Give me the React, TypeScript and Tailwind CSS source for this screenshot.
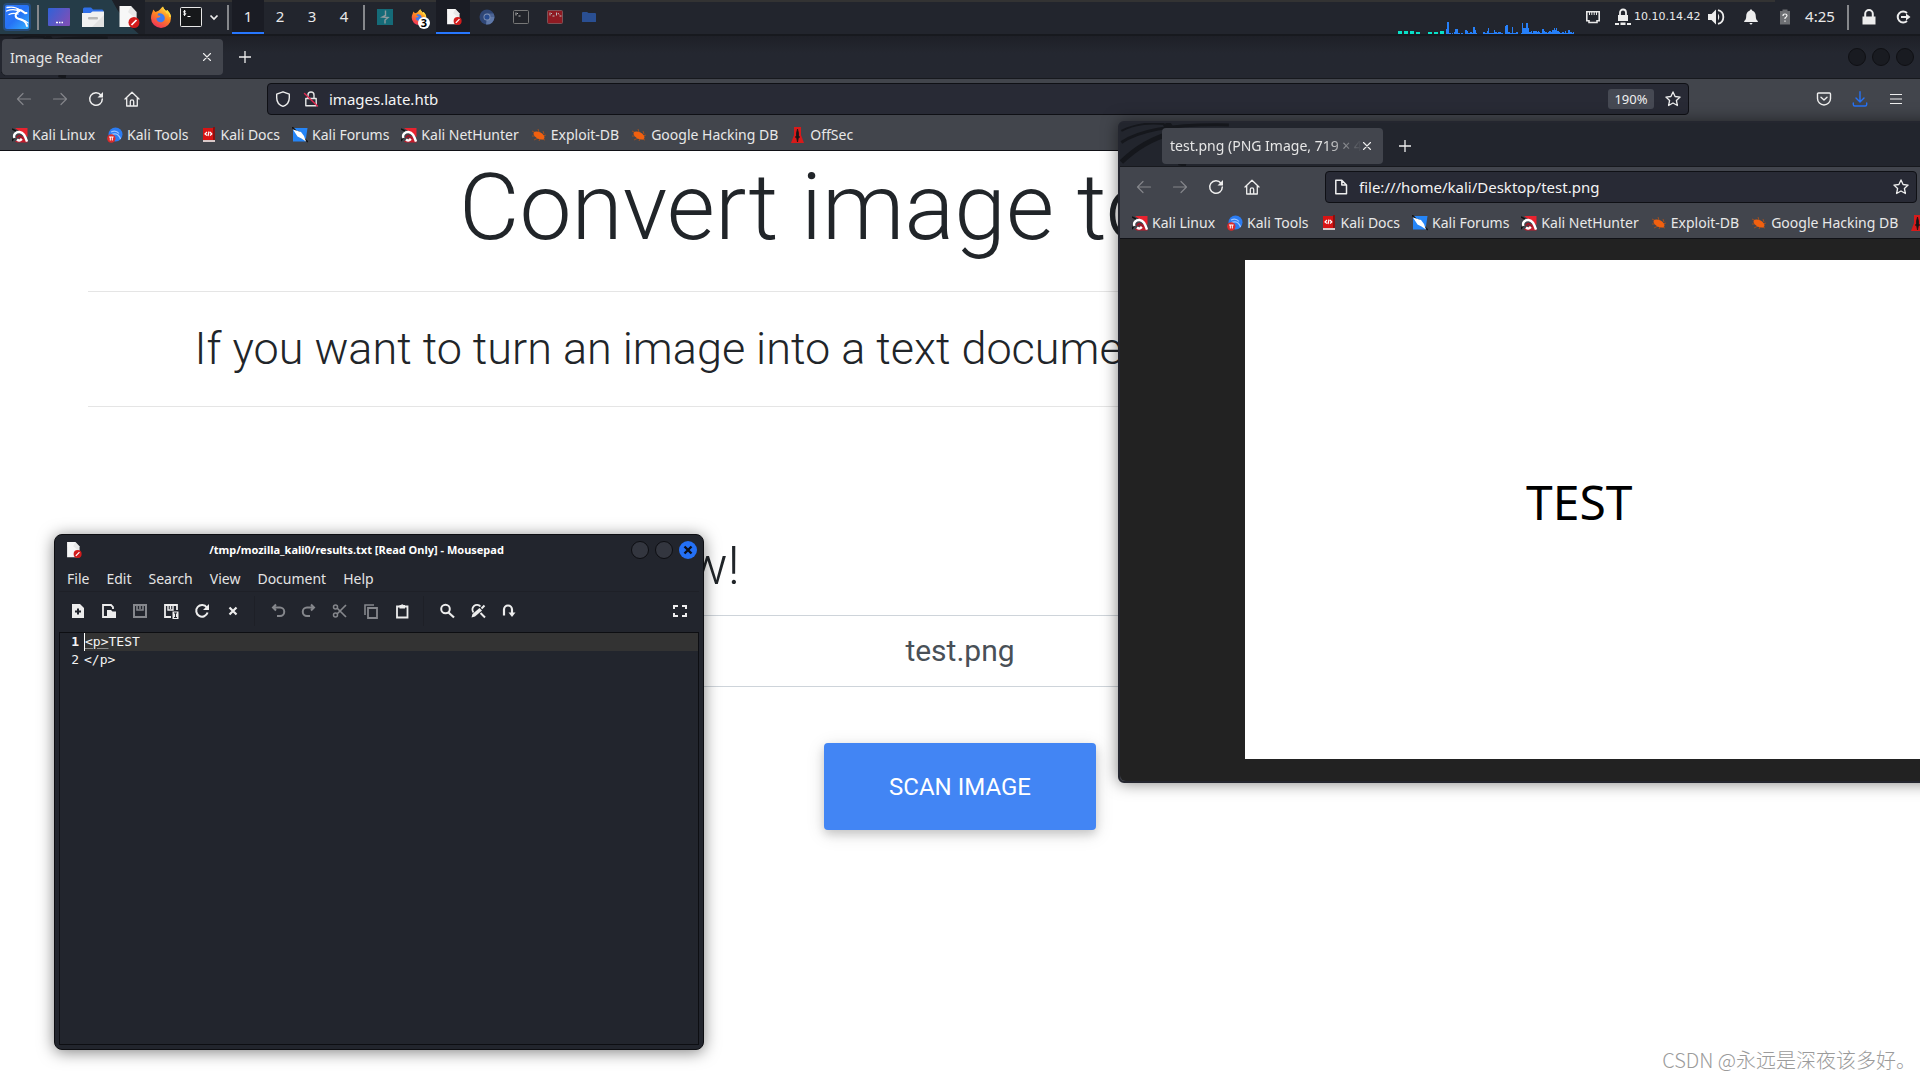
import React from "react";

type IconProps = { className?: string };

const KaliIcon = () => (
  <svg viewBox="0 0 28 28" className="size-7">
    <defs>
      <linearGradient id="kaliBg" x1="0" y1="0" x2="1" y2="1">
        <stop offset="0" stopColor="#2f7bff" />
        <stop offset="0.5" stopColor="#2672f5" />
        <stop offset="1" stopColor="#34b0ff" />
      </linearGradient>
    </defs>
    <rect x="0" y="0" width="28" height="28" rx="4" fill="#2a76f5" opacity="0.3" />
    <rect x="2" y="2" width="24" height="24" rx="2" fill="url(#kaliBg)" />
    <g fill="none" stroke="#fff" strokeLinecap="round">
      <path d="M4 4.500c5-1 10 0 13 3M3.500 8c5-2 10-1.500 13 .5M6 11.500c3-1.500 6-1.500 9-.5" strokeWidth="1.300" />
      <path d="M14.500 6.500c3 .2 5 1.300 7.500 3.600l1.500-.1" strokeWidth="2" />
      <path d="M15 9c-3 1.500-3.500 5.500.5 6.800 4 1 7.500 2 8.500 7.200" strokeWidth="2" />
      <path d="M18.500 17c2.500 0 4.500.7 6.500 2.800" strokeWidth="1.100" />
    </g>
  </svg>
);

const DesktopIcon = () => (
  <svg viewBox="0 0 22 18" className="h-[18px] w-[22px]">
    <defs>
      <linearGradient id="desk" x1="0" y1="0" x2="1" y2="0.6">
        <stop offset="0" stopColor="#2f62d8" />
        <stop offset="1" stopColor="#7a50b8" />
      </linearGradient>
    </defs>
    <rect width="22" height="18" rx="1" fill="url(#desk)" />
    <path d="M8 14.500h2M11 14.500h1.500M13.500 14.500H15" stroke="#fff" strokeWidth="1.400" />
  </svg>
);

const FilesIcon = () => (
  <svg viewBox="0 0 24 22" className="h-[22px] w-6">
    <path d="M2 9V3q0-1.500 1.500-1.500h6.500l2 2h9q1.500 0 1.500 1.500v4z" fill="#2f6fe8" />
    <path d="M1 7h8.500l2-1.500H23V21H1z" fill="#f1f1f1" />
    <path d="M23 9v12H11z" fill="#e2e2e2" />
    <rect x="7" y="11" width="10" height="2.500" rx="1" fill="#b9b9b9" />
  </svg>
);

const DocIcon = ({ className = "size-[22px]" }: IconProps) => (
  <svg viewBox="0 0 22 22" className={className}>
    <path d="M1.500 0H13l5.500 6v15h-17z" fill="#f7f7f7" />
    <path d="M13 0l5.500 6v7L10 6z" fill="#d9d9d9" opacity="0.5" />
    <circle cx="16" cy="16.500" r="5.500" fill="#d31c1c" />
    <path d="M13.500 19l5-5" stroke="#fff" strokeWidth="1.700" />
  </svg>
);

const FirefoxIcon = ({ className = "size-[22px]" }: IconProps) => (
  <svg viewBox="0 0 22 22" className={className}>
    <defs>
      <linearGradient id="ffx" x1="0.8" y1="0" x2="0.3" y2="1">
        <stop offset="0" stopColor="#ffe14a" />
        <stop offset="0.45" stopColor="#ff8a1e" />
        <stop offset="1" stopColor="#f0305c" />
      </linearGradient>
    </defs>
    <path d="M3.200 3.500L5.500 6l3-1.200C10 4 10.500 2 13 .5c.2 2 2 3 3 4.500l1.500-1c.5 1.500 3.500 3.500 3.500 8a10 9.800 0 0 1-20 .2C.8 8.500 2.800 6.500 3.200 3.500z" fill="url(#ffx)" />
    <path d="M8 7.500c3-1 6.500.8 6.800 4.200.2 3-2.300 4.800-4.600 4.500C7.500 15.900 6.200 14 6.500 12l2.500-.5c1-.3 1.500-1 1.200-1.600L7.500 9.300z" fill="#3c7bf2" />
    <path d="M13 .5c-1 3 3 4.500 3.800 7.500.8-.3 1-.9.8-1.600 1 1 1.500 3 1.400 4.600L21 11c0-4-3-5.500-3.500-7L16 5c-1-1.500-2.800-2.500-3-4.500z" fill="#ffd93c" />
  </svg>
);

const TermIcon = () => (
  <svg viewBox="0 0 22 20" className="h-5 w-[22px]">
    <rect x="0.500" y="0.500" width="21" height="19" rx="1" fill="#16181a" stroke="#e8e8e8" />
    <path d="M5.700 4.500c-.6-.7-2.200-.6-2.200.4 0 1.200 2.300.6 2.300 1.900 0 1-1.800 1.100-2.500.3M4.600 3v6M7.500 9.500h3" fill="none" stroke="#fff" strokeWidth="1" />
  </svg>
);

const BurpIcon = () => (
  <svg viewBox="0 0 16 16" className="size-4">
    <rect width="16" height="16" fill="#156b78" />
    <path d="M8.500 1.500v5L5.500 8l5.500 .5L8 11v3.500" fill="none" stroke="#8f9a9d" strokeWidth="1.400" />
  </svg>
);

const ChromiumIcon = () => (
  <svg viewBox="0 0 16 16" className="size-4">
    <circle cx="8" cy="8" r="7.500" fill="#2f4675" />
    <path d="M8 8l7.500 0A7.500 7.500 0 0 1 7 15.500z" fill="#5f78a8" />
    <path d="M8 4.500h6.500A7.500 7.500 0 0 1 15.500 8L11 8z" fill="#4c6494" />
    <circle cx="8" cy="8" r="3.500" fill="#8293b4" />
    <circle cx="8" cy="8" r="2.600" fill="#274b8f" />
  </svg>
);

const MiniTerm = ({ red = false }: { red?: boolean }) => (
  <svg viewBox="0 0 16 16" className="size-4">
    <rect x="0.500" y="1.500" width="15" height="13" rx="1" fill={red ? "#8f1a22" : "#22242a"} stroke={red ? "#7d5156" : "#777"} />
    <path d="M3 3.500v3M4 4l1 1M5.500 7h2" stroke="#bbb" strokeWidth="1" />
    {red && <path d="M9.500 3.500v3M11 4l1 1.500M12.500 7h2" stroke="#bbb" strokeWidth="1" />}
  </svg>
);

const FolderIcon = () => (
  <svg viewBox="0 0 16 16" className="size-4">
    <path d="M1 4q0-1 1-1h4l1.500 1H14q1 0 1 1v7.500q0 .5-.5.500h-13Q1 13 1 12.500z" fill="#2a4f92" />
  </svg>
);

const Chevron = () => (
  <svg viewBox="0 0 10 10" className="size-2.5" fill="none" stroke="#eee" strokeWidth="1.700">
    <path d="M1.500 3.500L5 7l3.500-3.500" />
  </svg>
);

const EthernetIcon = () => (
  <svg viewBox="0 0 16 16" className="size-4" fill="none" stroke="#e8e8e8" strokeWidth="1.600">
    <path d="M1.800 2.800h12.400v9H12v1.700H4v-1.700H1.800z" />
    <path d="M4.500 3v3M6.800 3v3M9.200 3v3M11.500 3v3" strokeWidth="1" />
  </svg>
);

const VpnIcon = () => (
  <svg viewBox="0 0 16 18" className="h-[18px] w-4" fill="#ededed">
    <path d="M3 7h10v6H3z" />
    <path d="M5 7.500V4.500a3 3 0 0 1 6 0v3" fill="none" stroke="#ededed" strokeWidth="1.800" />
    <path d="M0 15h4v2H0zM5.500 14.500h5V17h-5zM12 15h4v2h-4z" />
  </svg>
);

const VolumeIcon = () => (
  <svg viewBox="0 0 18 18" className="size-[18px]" fill="#ededed">
    <path d="M1 6h3.500L9 1.500v15L4.500 12H1z" />
    <path d="M11 5.500q2.500 3.500 0 7z" />
    <path d="M11 2.200a7 7 0 0 1 0 13.600" fill="none" stroke="#ededed" strokeWidth="1.800" />
  </svg>
);

const BellIcon = () => (
  <svg viewBox="0 0 16 16" className="size-4" fill="#ededed">
    <path d="M8 .5c1 0 1.300.7 1.300 1.300C12 2.500 12.800 5 12.800 7.500c0 2.500.7 3.500 2 4.500v1H1.200v-1c1.300-1 2-2 2-4.500C3.200 5 4 2.500 6.700 1.800 6.700 1.200 7 .5 8 .5zM6.500 14h3q-.3 1.500-1.500 1.500T6.500 14z" />
  </svg>
);

const BatteryIcon = () => (
  <svg viewBox="0 0 12 16" className="h-4 w-3">
    <path d="M1 2h2.500V.5h5V2H11v13.500H1z" fill="#6d6f73" />
    <path d="M4 7q0-2 2-2t2 1.600Q8 8 6 9v1M6 11.500v1.300" fill="none" stroke="#f4f4f4" strokeWidth="1.200" />
  </svg>
);

const PadlockIcon = () => (
  <svg viewBox="0 0 14 16" className="h-4 w-3.5">
    <path d="M.5 7.500h13v8H.5z" fill="#ededed" />
    <path d="M3.200 8V4.800a3.800 3.800 0 0 1 7.600 0V8" fill="none" stroke="#ededed" strokeWidth="2" />
  </svg>
);

const LogoutIcon = () => (
  <svg viewBox="0 0 16 16" className="size-4">
    <path d="M12 4A5.500 5.500 0 1 0 12 12" fill="none" stroke="#ededed" strokeWidth="2" />
    <path d="M6 7h5V4.500L15.500 8 11 11.500V9H6z" fill="#ededed" />
  </svg>
);

const strokeProps = { fill: "none", strokeLinecap: "round", strokeLinejoin: "round" } as const;

const BackIcon = () => (
  <svg viewBox="0 0 16 16" className="size-4" stroke="#83858a" strokeWidth="1.200" {...strokeProps}>
    <path d="M14.500 8H1.500M7 2.500L1.500 8 7 13.500" />
  </svg>
);
const ForwardIcon = () => (
  <svg viewBox="0 0 16 16" className="size-4" stroke="#83858a" strokeWidth="1.200" {...strokeProps}>
    <path d="M1.500 8h13M9 2.500L14.500 8 9 13.500" />
  </svg>
);
const ReloadIcon = () => (
  <svg viewBox="0 0 16 16" className="size-4">
    <path d="M13 4.200A6.300 6.300 0 1 0 14.300 8" stroke="#eee" strokeWidth="1.500" {...strokeProps} />
    <path d="M15 1v5.500H9.500z" fill="#eee" />
  </svg>
);
const HomeIcon = () => (
  <svg viewBox="0 0 16 16" className="size-4" stroke="#eee" strokeWidth="1.300" {...strokeProps}>
    <path d="M1 8l7-6.800L15 8M2.700 6.800V15h10.600V6.800M6.300 15v-4.500a1.700 1.700 0 0 1 3.400 0V15" />
  </svg>
);
const ShieldIcon = () => (
  <svg viewBox="0 0 16 16" className="size-4" stroke="#eee" strokeWidth="1.400" {...strokeProps}>
    <path d="M8 .8l6.300 2.400v3.500c0 4-2.500 7.300-6.300 8.600-3.800-1.300-6.300-4.600-6.300-8.600V3.200z" />
  </svg>
);
const InsecureIcon = () => (
  <svg viewBox="0 0 16 16" className="size-4" stroke="#e6e6e6" strokeWidth="1.400" {...strokeProps}>
    <path d="M2.800 7.500h10.400v7.200H2.800zM5 7V4a3 3 0 0 1 6 0v3" />
    <path d="M1.500 2.500l13 12.500" stroke="#e22850" />
  </svg>
);
const FileIcon = () => (
  <svg viewBox="0 0 16 16" className="size-4" stroke="#eee" strokeWidth="1.500" {...strokeProps}>
    <path d="M2.800 1.300h6L13.500 6v8.700H2.800zM8.800 1.500V6h4.500" />
  </svg>
);
const StarIcon = () => (
  <svg viewBox="0 0 16 16" className="size-4" stroke="#eee" strokeWidth="1.300" {...strokeProps}>
    <path d="M8 .9l2.100 4.600 5 .6-3.700 3.400 1 5L8 12l-4.400 2.500 1-5L.9 6.100l5-.6z" />
  </svg>
);
const PocketIcon = () => (
  <svg viewBox="0 0 16 16" className="size-4" stroke="#eee" strokeWidth="1.400" {...strokeProps}>
    <path d="M2.500 2h11q1 0 1 1v4.500a6.500 6.500 0 0 1-13 0V3q0-1 1-1zM5 6.300L8 9l3-2.700" />
  </svg>
);
const DownloadIcon = () => (
  <svg viewBox="0 0 16 16" className="size-4" stroke="#2672f5" strokeWidth="1.400" {...strokeProps}>
    <path d="M8 .8v10M4 7l4 4 4-4M1.300 12v1.500q0 1.500 1.500 1.500h10.400q1.500 0 1.500-1.500V12" />
  </svg>
);
const MenuIcon = () => (
  <svg viewBox="0 0 16 16" className="size-4" stroke="#eee" strokeWidth="1.200">
    <path d="M2 3.500h12M2 8h12M2 12.500h12" />
  </svg>
);
const CloseIcon = ({ className = "size-2.5" }: IconProps) => (
  <svg viewBox="0 0 10 10" className={className} stroke="#eee" strokeWidth="1.100" {...strokeProps}>
    <path d="M1.500 1.500l7 7M8.500 1.500l-7 7" />
  </svg>
);
const PlusIcon = () => (
  <svg viewBox="0 0 14 14" className="size-3.5" stroke="#eee" strokeWidth="1.300">
    <path d="M7 1v12M1 7h12" />
  </svg>
);

const RedDragon = () => (
  <svg viewBox="0 0 16 16" className="size-4">
    <path d="M3 1h12.500v9z" fill="#e8232f" />
    <path d="M0 2l4 2M0 14l3-5" stroke="#111" strokeWidth="1.500" />
    <path d="M3 14.500L5 15.500h10.500V14L11 9z" fill="#c41c2c" />
    <path d="M2.500 11C1 7.500 4 4.800 7.500 5c4 .3 5.500 4 7.500 9.500M5 12.500c2.500 2 5 .5 4.500-1.500" fill="none" stroke="#fff" strokeWidth="2.400" />
    <path d="M5 11q1-3 3.500-2l2.500 3" fill="none" stroke="#a01424" strokeWidth="1.800" />
  </svg>
);
const ToolsIcon = () => (
  <svg viewBox="0 0 16 16" className="size-4">
    <circle cx="8.500" cy="7.500" r="7" fill="#2b7cf3" />
    <path d="M4 5c3-1.500 6-1 8 1.500M4 8c3-2 6-1 7 0s2 2 2.500 4" fill="none" stroke="#9ec5ff" strokeWidth="1.200" />
    <circle cx="4.300" cy="11.500" r="4.200" fill="#d92b2b" />
    <path d="M2 10h4.600M3.300 10v3.500M5.300 10v3.500" stroke="#fff" strokeWidth="1" />
  </svg>
);
const DocsIcon = () => (
  <svg viewBox="0 0 16 16" className="size-4">
    <path d="M2 1h11v12H2z" fill="#d81414" />
    <path d="M12 0h2v14h-2z" fill="#8a1010" />
    <path d="M2 13h12v2H2z" fill="#d9c9c9" />
    <path d="M6 5L4 7l2 1.500M9 5l1.800 2L9 8.500M8 4.500L7 9" fill="none" stroke="#fff" strokeWidth="1.200" />
  </svg>
);
const ForumsIcon = () => (
  <svg viewBox="0 0 16 16" className="size-4">
    <path d="M1 1h14.500l-2 13.500H1z" fill="#2585f7" />
    <path d="M0 0l6 6 1-2M8 8l8 7" fill="none" stroke="#141414" strokeWidth="1.600" />
    <path d="M1 2.500L9 5l3 4 2 5.500-4.500-3-4-2z" fill="#fff" />
  </svg>
);
const BugIcon = () => (
  <svg viewBox="0 0 16 16" className="size-4">
    <path d="M1 4l4 2M7 2l1 3M12 4l1 3M1 9h4M3 13l4-2M8 14l1-2M15 8l-3 1M14 13l-3-1" stroke="#a8501c" strokeWidth="0.900" />
    <ellipse cx="8" cy="8.500" rx="6" ry="3.300" transform="rotate(28 8 8.500)" fill="#f2600f" />
  </svg>
);
const OffSecIcon = () => (
  <svg viewBox="0 0 16 16" className="size-4">
    <path d="M4 0h7v8l3 8H1l3-8z" fill="#d81a1a" />
    <path d="M7.500 2l1 4v4L7.500 15l-1-5V6z" fill="#161616" stroke="#161616" strokeWidth="0.800" />
    <path d="M5 10h5" stroke="#161616" strokeWidth="1.200" />
  </svg>
);

const bookmarks = [
  { label: "Kali Linux", icon: <RedDragon /> },
  { label: "Kali Tools", icon: <ToolsIcon /> },
  { label: "Kali Docs", icon: <DocsIcon /> },
  { label: "Kali Forums", icon: <ForumsIcon /> },
  { label: "Kali NetHunter", icon: <RedDragon /> },
  { label: "Exploit-DB", icon: <BugIcon /> },
  { label: "Google Hacking DB", icon: <BugIcon /> },
  { label: "OffSec", icon: <OffSecIcon /> },
];

const Bookmarks = () => (
  <nav aria-label="Bookmarks" className="flex h-[31px] shrink-0 items-center gap-3 pl-3 text-[14px] text-[#e8e8e8]">
    {bookmarks.map((b) => (
      <a key={b.label} href="#" className="flex shrink-0 items-center gap-1 whitespace-nowrap">
        {b.icon}
        {b.label}
      </a>
    ))}
  </nav>
);

const ToolButton = ({ label, className, children }: { label: string; className?: string; children: React.ReactNode }) => (
  <button type="button" aria-label={label} className={"flex shrink-0 items-center justify-center " + (className ?? "h-9 w-9")}>
    {children}
  </button>
);

const NavBar = ({
  address,
  margin,
  leading,
  zoom,
}: {
  address: string;
  margin: string;
  leading: React.ReactNode;
  zoom?: string;
}) => (
  <div className="flex h-10 shrink-0 items-center px-1.5">
    <ToolButton label="Back"><BackIcon /></ToolButton>
    <ToolButton label="Forward"><ForwardIcon /></ToolButton>
    <ToolButton label="Reload"><ReloadIcon /></ToolButton>
    <ToolButton label="Home"><HomeIcon /></ToolButton>
    <div className={"flex h-8 min-w-0 flex-1 items-center rounded border border-[#0f1015] bg-[#282a35] pl-[7px] " + margin}>
      {leading}
      <input
        aria-label="Address"
        defaultValue={address}
        className="min-w-0 flex-1 bg-transparent text-[15px] text-[#f4f4f4] outline-none"
      />
      {zoom && (
        <button type="button" className="mr-1 h-5 w-[46px] rounded-[3px] bg-[#464953] text-[13px] leading-5 text-[#f0f0f0]">
          {zoom}
        </button>
      )}
      <ToolButton label="Bookmark this page" className="h-8 w-[30px]"><StarIcon /></ToolButton>
    </div>
    <ToolButton label="Save to Pocket"><PocketIcon /></ToolButton>
    <ToolButton label="Downloads"><DownloadIcon /></ToolButton>
    <ToolButton label="Menu"><MenuIcon /></ToolButton>
  </div>
);

const TabSwirl = () => (
  <svg viewBox="0 0 120 44" className="absolute left-0 top-0 h-full w-[120px]" fill="none" stroke="#15171c">
    <path d="M0 20C20 6 60 1 110 2" strokeWidth="3" />
    <path d="M0 40C14 26 30 16 52 10" strokeWidth="5" />
    <path d="M46 0C54 14 66 24 62 44" strokeWidth="8" />
    <path d="M0 8C16 0 30 0 44 1" strokeWidth="2" />
  </svg>
);

const Divider = () => (
  <div className="flex w-2 items-center justify-center">
    <div className="h-[25px] w-0.5 bg-[#86888c]" />
  </div>
);

const load = [
  14, 36, 4, 2, 1, 2, 1, 5, 16, 15, 2, 2, 0, 3, 3, 1, 1, 12, 9, 2, 2, 6, 5, 2, 20, 12, 3, 1, 0, 0, 0, 0, 0, 5, 3, 3, 8, 17, 3, 2,
  3, 2, 11, 5, 5, 4, 6, 6, 4, 4, 0, 0, 24, 26, 4, 5, 4, 4, 20, 2, 3, 2, 5, 1, 0, 0, 4, 32, 18, 5, 17, 33, 18, 6, 7, 8, 4, 9, 4, 8,
  7, 8, 5, 4, 3, 14, 8, 6, 7, 4, 7, 8, 5, 3, 12, 19, 12, 18, 10, 5, 4, 3, 7, 6, 3, 8, 4, 4, 13, 7, 5, 3, 6,
];

const Taskbar = () => (
  <header className="relative flex h-9 shrink-0 items-stretch border-b-2 border-[#17191e] bg-[#22252d] text-[#e9e9e9]">
    <svg viewBox="0 0 145 34" className="absolute left-0 top-0 h-[34px] w-[145px]">
      <path d="M0 0h112q10 20 27 34H0z" fill="#253c48" />
      <path d="M112 0h33v34h-6Q122 20 112 0z" fill="#1d2027" />
    </svg>
    <div className="absolute left-[145px] right-[145px] top-0 h-0.5 bg-[#333333]" />
    <div className="relative flex items-stretch">
      <ToolButton label="Applications" className="w-[34px]"><KaliIcon /></ToolButton>
      <Divider />
      <ToolButton label="Show desktop" className="w-[34px]"><DesktopIcon /></ToolButton>
      <ToolButton label="Files" className="w-[34px]"><FilesIcon /></ToolButton>
      <ToolButton label="Text editor" className="w-[34px] pl-1"><DocIcon /></ToolButton>
      <ToolButton label="Firefox" className="w-[34px]"><FirefoxIcon /></ToolButton>
      <ToolButton label="Terminal" className="w-[26px]"><TermIcon /></ToolButton>
      <ToolButton label="More terminals" className="w-5"><Chevron /></ToolButton>
      <Divider />
      {["1", "2", "3", "4"].map((n) => (
        <button
          key={n}
          type="button"
          className={
            n === "1"
              ? "w-8 border-b-2 border-[#2777ff] bg-[#1a1c24] text-[15px]"
              : "w-8 border-b-2 border-transparent text-[15px]"
          }
        >
          {n}
        </button>
      ))}
      <Divider />
      <ToolButton label="Burp Suite" className="w-[34px]"><BurpIcon /></ToolButton>
      <ToolButton label="Firefox windows" className="relative w-[34px]">
        <FirefoxIcon className="size-4" />
        <span className="absolute bottom-[5px] left-4 flex size-3 items-center justify-center rounded-full bg-white text-[11px] font-bold text-black">
          3
        </span>
      </ToolButton>
      <ToolButton label="Mousepad" className="w-[34px] border-b-2 border-[#2777ff] bg-[#1a1c24] pl-0.5 pt-0.5"><DocIcon className="size-4" /></ToolButton>
      <ToolButton label="Chromium" className="w-[34px]"><ChromiumIcon /></ToolButton>
      <ToolButton label="Terminal window" className="w-[34px]"><MiniTerm /></ToolButton>
      <ToolButton label="Root terminal window" className="w-[34px]"><MiniTerm red /></ToolButton>
      <ToolButton label="Folder window" className="w-[34px]"><FolderIcon /></ToolButton>
    </div>
    <div className="relative ml-auto flex items-stretch">
      <svg viewBox="0 0 176 34" className="h-[34px] w-44" shapeRendering="crispEdges">
        {[0, 6, 12, 18, 30, 36, 42].map((x, i) => (
          <rect key={x} x={x} y={i < 3 || i === 6 ? 31 : 32} width="4" height={i < 3 || i === 6 ? 3 : 2} fill="#08e0c8" />
        ))}
        {load.map((v, i) => (
          <rect key={i} x={48 + (i * 128) / load.length} y={34 - v / 3} width="1.500" height={v / 3} fill="#2680fa" />
        ))}
      </svg>
      <ToolButton label="Wired network" className="w-[38px]"><EthernetIcon /></ToolButton>
      <ToolButton label="VPN" className="w-[22px]"><VpnIcon /></ToolButton>
      <span className="flex w-[70px] items-center font-['DejaVu_Sans'] text-[11px]">10.10.14.42</span>
      <ToolButton label="Volume" className="w-6"><VolumeIcon /></ToolButton>
      <ToolButton label="Notifications" className="w-[46px]"><BellIcon /></ToolButton>
      <ToolButton label="Battery" className="w-[22px]"><BatteryIcon /></ToolButton>
      <time className="flex w-12 items-center justify-center pb-0.5 text-[15px]">4:25</time>
      <Divider />
      <ToolButton label="Lock screen" className="w-[34px]"><PadlockIcon /></ToolButton>
      <ToolButton label="Log out" className="w-[34px]"><LogoutIcon /></ToolButton>
    </div>
  </header>
);

const MainBrowser = () => (
  <>
    <div className="relative flex h-[42px] shrink-0 items-center bg-gradient-to-b from-[#1e2027] to-[#242730] to-40%">
      <TabSwirl />
      <div className="relative ml-0.5 flex h-9 w-[221px] items-center justify-between rounded bg-[#42454d] pl-2 pr-[11px] text-[14px] text-[#e6e6e6]">
        Image Reader
        <button type="button" aria-label="Close tab"><CloseIcon /></button>
      </div>
      <ToolButton label="New tab" className="ml-0.5 h-9 w-10"><PlusIcon /></ToolButton>
      <div className="ml-auto flex gap-1.5 pr-1.5">
        <button type="button" aria-label="Minimize" className="size-[18px] rounded-full border border-[#0f1014] bg-[#191b21]" />
        <button type="button" aria-label="Maximize" className="size-[18px] rounded-full border border-[#0f1014] bg-[#191b21]" />
        <button type="button" aria-label="Close" className="size-[18px] rounded-full border border-[#0f1014] bg-[#191b21]" />
      </div>
    </div>
    <div className="shrink-0 border-b border-t border-b-[#101116] border-t-[#17191e] bg-[#42454c]">
      <NavBar
        address="images.late.htb"
        margin="mx-[117px]"
        zoom="190%"
        leading={
          <>
            <ToolButton label="Tracking protection" className="mr-3 size-4"><ShieldIcon /></ToolButton>
            <ToolButton label="Connection not secure" className="mr-2.5 size-4"><InsecureIcon /></ToolButton>
          </>
        }
      />
      <Bookmarks />
    </div>
    <main className="flex-1 bg-white px-[88px] font-['Roboto'] text-[#212529]">
      <h1 className="whitespace-nowrap border-b border-[#e5e5e5] pt-1 pb-[30px] pl-[371px] text-[93px] font-light leading-[106px]">
        Convert image to text!
      </h1>
      <p className="whitespace-nowrap border-b border-[#e5e5e5] py-[30px] text-center text-[45px] font-light leading-[54px]">
        If you want to turn an image into a text document, you came to the right place.
      </p>
      <div className="pt-[128px]">
        <h2 className="pb-[18px] pl-[22px] text-[53px] font-light leading-[62px]">Scan your image right now!</h2>
        <div className="rounded border border-[#ced4da] py-[17px] text-center text-[30px] leading-9 text-[#495057]">test.png</div>
      </div>
      <div className="flex justify-center pt-14">
        <button
          type="button"
          className="h-[87px] w-[272px] rounded bg-[#4285f4] text-[24px] text-white shadow-[0_4px_10px_rgba(0,0,0,0.16),0_4px_19px_rgba(0,0,0,0.12)]"
        >
          SCAN IMAGE
        </button>
      </div>
    </main>
  </>
);

const ImageWindow = () => (
  <section className="absolute left-[1118px] top-[121px] flex w-[970px] flex-col rounded-md border-2 border-[#24262f] bg-[#42454d] shadow-[0_0_16px_rgba(0,0,0,0.5)]">
    <div className="relative flex h-11 items-center border-b border-[#17191e] bg-[#22252d] pt-0.5">
      <TabSwirl />
      <div className="relative ml-[42px] flex h-9 w-[221px] items-center rounded bg-[#42454d] pl-2 pr-[11px] text-[14px] text-[#e6e6e6]">
        <span className="flex-1 overflow-hidden whitespace-nowrap [mask-image:linear-gradient(to_right,black_80%,transparent)]">
          test.png (PNG Image, 719 × 499 pixels)
        </span>
        <button type="button" aria-label="Close tab"><CloseIcon /></button>
      </div>
      <ToolButton label="New tab" className="ml-0.5 h-9 w-10"><PlusIcon /></ToolButton>
    </div>
    <NavBar
      address="file:///home/kali/Desktop/test.png"
      margin="mx-[55px]"
      leading={<span className="mr-2.5"><FileIcon /></span>}
    />
    <Bookmarks />
    <div className="rounded-b-md border-t border-[#101116] bg-[#222222] pt-[21px] pb-[22px] pl-[125px]">
      <div className="flex h-[499px] w-[719px] items-center bg-white pb-4 pl-[281px] font-['Noto_Sans'] text-[48px] text-black">
        TEST
      </div>
    </div>
  </section>
);

const icoLight = "#ededed";
const icoDim = "#85878c";

const Mp = ({ children }: { children: React.ReactNode }) => (
  <svg viewBox="0 0 16 16" className="size-4">
    {children}
  </svg>
);

const toolGroups: { label: string; icon: React.ReactNode }[][] = [
  [
    {
      label: "New",
      icon: <Mp><path d="M2 1h8l4 4v10H2z" fill={icoLight} /><path d="M8 5.500v6M5 8.500h6" stroke="#22252d" strokeWidth="2" /></Mp>,
    },
    {
      label: "Open",
      icon: <Mp><path d="M6 14H2V2h8l2 2v2" fill="none" stroke={icoLight} strokeWidth="1.800" /><path d="M6 7h4l1.500 1.500H15V15H6z" fill={icoLight} /></Mp>,
    },
    {
      label: "Save",
      icon: <Mp><path d="M2 2h12v12H2z" fill="none" stroke={icoDim} strokeWidth="2" /><path d="M5 2v5h6V2M8 2v4" fill="none" stroke={icoDim} strokeWidth="1.600" /></Mp>,
    },
    {
      label: "Save as",
      icon: (
        <Mp>
          <path d="M8 14H2V2h12v5" fill="none" stroke={icoLight} strokeWidth="1.800" />
          <path d="M5 2v5h5V2M7.500 2v4" fill="none" stroke={icoLight} strokeWidth="1.400" />
          <path d="M9.500 8.500h6V16h-6z" fill={icoLight} />
          <path d="M11 10h3M12.500 10v4.500M11 14.500h3" stroke="#22252d" strokeWidth="1" />
        </Mp>
      ),
    },
    {
      label: "Reload",
      icon: <Mp><path d="M12.800 4.500A5.800 5.800 0 1 0 13.600 9.500" fill="none" stroke={icoLight} strokeWidth="2" /><path d="M15 1v6H9z" fill={icoLight} /></Mp>,
    },
    { label: "Close file", icon: <Mp><path d="M4.500 4.500l7 7M11.500 4.500l-7 7" stroke={icoLight} strokeWidth="2.200" /></Mp> },
  ],
  [
    { label: "Undo", icon: <Mp><path d="M6 1.500L3 4.500l3 3M3 4.500h7a4 4 0 0 1 0 8.500H7" fill="none" stroke={icoDim} strokeWidth="2" /></Mp> },
    { label: "Redo", icon: <Mp><path d="M10 1.500l3 3-3 3M13 4.500H6a4 4 0 0 0 0 8.500h3" fill="none" stroke={icoDim} strokeWidth="2" /></Mp> },
    {
      label: "Cut",
      icon: <Mp><path d="M14 2L5 11M14 14L5 5" stroke={icoDim} strokeWidth="1.700" /><circle cx="3.500" cy="4" r="2" fill="none" stroke={icoDim} strokeWidth="1.500" /><circle cx="3.500" cy="12" r="2" fill="none" stroke={icoDim} strokeWidth="1.500" /></Mp>,
    },
    { label: "Copy", icon: <Mp><path d="M2 12V2h9" fill="none" stroke={icoDim} strokeWidth="1.600" /><path d="M5 5h9v10H5z" fill="none" stroke={icoDim} strokeWidth="1.800" /></Mp> },
    { label: "Paste", icon: <Mp><path d="M3 3.500h10.500V14.500H3z" fill="none" stroke={icoLight} strokeWidth="1.800" /><path d="M5.500 2h1.500q1-1.500 2.500 0h1.500v3.500h-5.500z" fill={icoLight} /></Mp> },
  ],
  [
    { label: "Find", icon: <Mp><circle cx="6.500" cy="6" r="4.300" fill="none" stroke={icoLight} strokeWidth="2" /><path d="M9.500 9.500l5.500 5" stroke={icoLight} strokeWidth="2.200" /></Mp> },
    {
      label: "Find and replace",
      icon: <Mp><path d="M3.500 9.500a4.600 4.600 0 1 1 7-6" fill="none" stroke={icoLight} strokeWidth="1.800" /><path d="M1.500 14.500l1-3.500 7-6 2.500 2.500-7 6z" fill={icoLight} /><path d="M10.500 10l4.500 4.500M11.500 5.500l3-3" stroke={icoLight} strokeWidth="2" /></Mp>,
    },
    { label: "Go to", icon: <Mp><path d="M3 12.500V6.500a4 4 0 0 1 8 0V10" fill="none" stroke={icoLight} strokeWidth="2.200" /><path d="M7.500 9.500h7L11 14z" fill={icoLight} /></Mp> },
  ],
];

const Mousepad = () => (
  <section className="absolute left-[54px] top-[534px] flex h-[516px] w-[650px] flex-col rounded-lg border border-[#0d0e12] bg-[#22252d] px-1 pb-1 text-[#e4e4e4] shadow-[0_2px_16px_rgba(0,0,0,0.5)]">
    <div className="flex h-[30px] shrink-0 items-center pl-[7px] pr-0.5">
      <DocIcon className="size-4" />
      <h2 className="flex-1 text-center text-[11px] font-bold text-white">/tmp/mozilla_kali0/results.txt [Read Only] - Mousepad</h2>
      <div className="flex gap-1.5">
        <button type="button" aria-label="Minimize" className="size-[18px] rounded-full border border-[#0d0e12] bg-[#33363f]" />
        <button type="button" aria-label="Maximize" className="size-[18px] rounded-full border border-[#0d0e12] bg-[#33363f]" />
        <button type="button" aria-label="Close" className="flex size-[18px] items-center justify-center rounded-full bg-[#2470f5]">
          <svg viewBox="0 0 10 10" className="size-2.5" stroke="#0c0f18" strokeWidth="2.400">
            <path d="M1.500 1.500l7 7M8.500 1.500l-7 7" />
          </svg>
        </button>
      </div>
    </div>
    <nav aria-label="Menu bar" className="flex h-[27px] shrink-0 items-center gap-[17px] border-b border-[#1e2027] pl-2 text-[14px]">
      {["File", "Edit", "Search", "View", "Document", "Help"].map((m) => (
        <button key={m} type="button">{m}</button>
      ))}
    </nav>
    <div className="flex h-10 shrink-0 items-center pb-0.5 pl-[3px] pr-1">
      {toolGroups.map((g, i) => (
        <React.Fragment key={i}>
          {i > 0 && <div className="mx-1.5 h-[30px] w-0.5 border-l border-[#1e2027]" />}
          {g.map((t) => (
            <ToolButton key={t.label} label={t.label} className="h-[31px] w-[31px]">{t.icon}</ToolButton>
          ))}
        </React.Fragment>
      ))}
      <ToolButton label="Fullscreen" className="ml-auto h-[31px] w-[31px]">
        <Mp><path d="M6 3H2v3M10 3h4v3M6 13H2v-3M10 13h4v-3" fill="none" stroke={icoLight} strokeWidth="2" /></Mp>
      </ToolButton>
    </div>
    <div className="flex-1 border border-[#0d0e12] font-['DejaVu_Sans_Mono'] text-[13px] leading-[18px] text-[#f4f4f4]">
      <div className="flex h-[18px]">
        <span className="w-6 pr-[5px] text-right font-bold">1</span>
        <span className="flex-1 border-l border-white bg-[#333333]">
          <span className="underline decoration-[#8a8a8a] underline-offset-2">&lt;p&gt;</span>TEST
        </span>
      </div>
      <div className="flex h-[18px]">
        <span className="w-6 pr-[5px] text-right">2</span>
        <span className="flex-1">&lt;/p&gt;</span>
      </div>
    </div>
  </section>
);

export default function App() {
  return (
    <div className="relative flex min-h-screen flex-col overflow-hidden bg-white font-['Noto_Sans',sans-serif]">
      <Taskbar />
      <MainBrowser />
      <ImageWindow />
      <Mousepad />
      <div className="absolute bottom-1 right-1 font-['Noto_Sans_CJK_SC',sans-serif] text-[20px] font-light leading-8 text-[#9b9b9b]">
        CSDN @永远是深夜该多好。
      </div>
    </div>
  );
}
